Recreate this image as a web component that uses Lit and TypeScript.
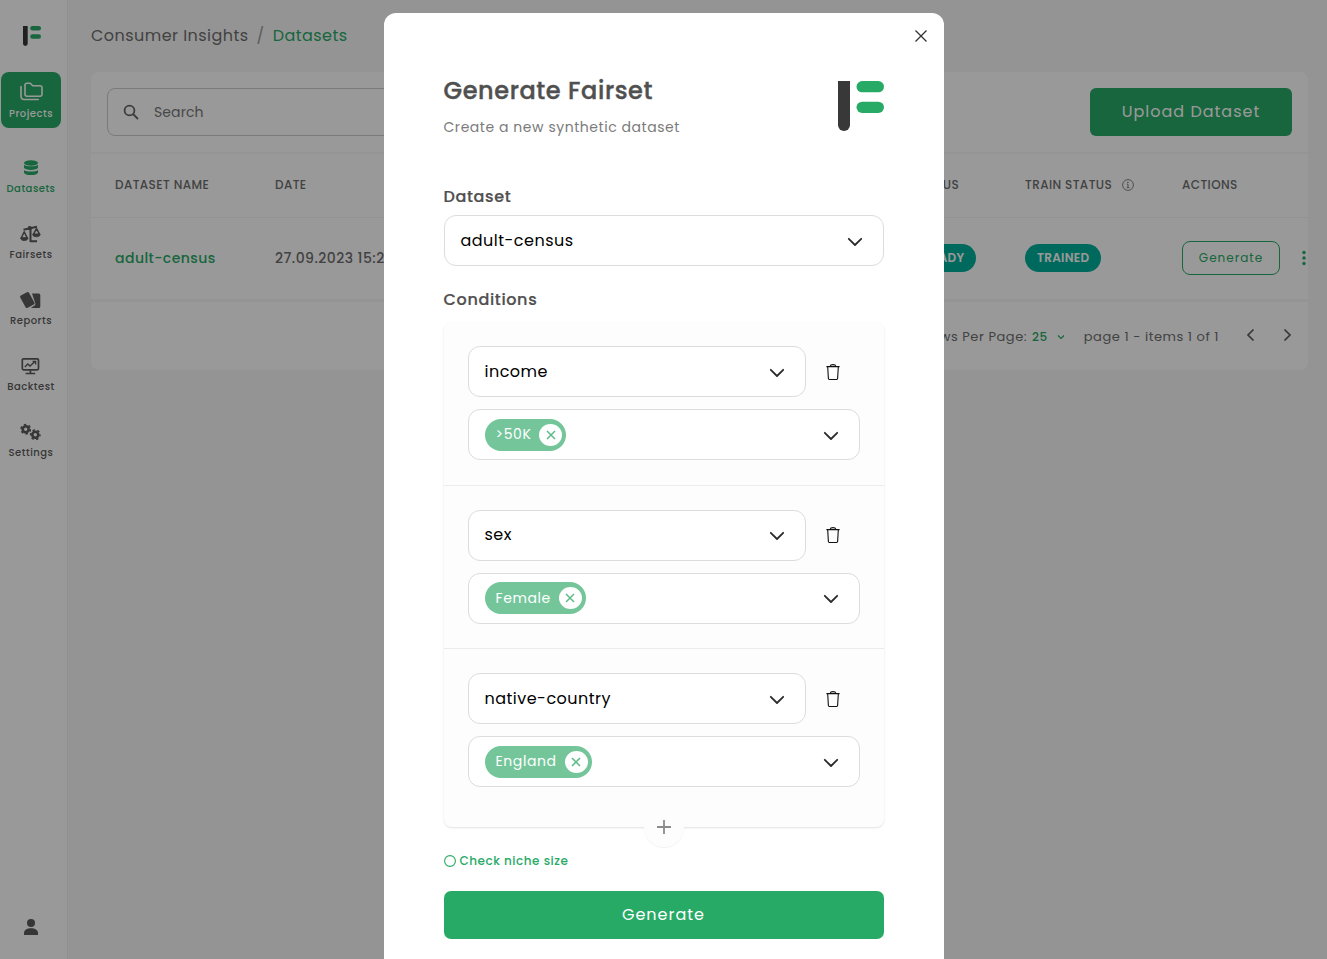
import { LitElement, html, css, svg } from "lit";
import { customElement, property } from "lit/decorators.js";
import { classMap } from "lit/directives/class-map.js";

const chevron = html`<svg width="16" height="10" viewBox="0 0 16 10" fill="none" stroke="#2b2b2b" stroke-width="1.8" stroke-linecap="round" stroke-linejoin="round"><path d="M1.8 1.8 8 8l6.2-6.2"/></svg>`;

const trash = html`<svg width="14" height="18" viewBox="0 0 14 18" fill="none" stroke="#111" stroke-width="1.1" stroke-linejoin="round"><path d="M.4 3.6h13.2M4 3.500c.3-1.300 1-1.900 3-1.900s2.700.600 3 1.900M1.700 4l.700 11.600c0 .600.400.900 1 .900h7.200c.600 0 1-.300 1-.900L12.300 4"/></svg>`;

const logo = (w: number, h: number) => html`<svg width=${w} height=${h} viewBox="0 0 46 50" preserveAspectRatio="none"><path fill="#383838" d="M0 0h12v44a6 6 0 0 1-12 0z"/><rect x="18.5" y="0" width="27.5" height="11.3" rx="5.65" fill="#27aa66"/><rect x="18.5" y="20.7" width="27.5" height="11.3" rx="5.65" fill="#27aa66"/></svg>`;

const glyphs = {
  projects: svg`<g fill="none" stroke="#fff" stroke-width="1.6" stroke-linejoin="round" stroke-linecap="round"><path d="M5 3.1a1.8 1.8 0 0 1 1.8-1.8h3.5l2.4 2.5h7.5A1.8 1.8 0 0 1 22 5.6v6.800a1.800 1.800 0 0 1-1.800 1.800H6.800A1.800 1.800 0 0 1 5 12.400z"/><path d="M1 4.500v9.700a3.300 3.300 0 0 0 3.300 3.300h14"/></g>`,
  datasets: svg`<g fill="#27aa66"><ellipse cx="12" cy="4" rx="7" ry="2.800"/><path d="M5 5.700c2 2.200 12 2.200 14 0v3.100c-1.500 2.800-12.500 2.800-14 0z"/><path d="M5 10.900c2 2.200 12 2.200 14 0v2.600c0 3.400-14 3.400-14 0z"/></g>`,
  fairsets: svg`<g fill="none" stroke="#5a5a5a" stroke-width="1.500" stroke-linejoin="round"><path d="M4.500 4.800 18 1.700M11.500 3.500v12.700H18" stroke-width="2"/><circle cx="10.800" cy="3.200" r="1.400" fill="#5a5a5a"/><path d="M5.200 6.800 2.300 13h6z M17.500 3.700l-3 5.500h6z"/><path d="M1.500 13h7.600c-.5 3.400-7.100 3.400-7.600 0zM13.500 9.500h7.800c-.5 3-7.300 3-7.800 0z" fill="#5a5a5a" stroke-width=".8"/></g>`,
  reports: svg`<g fill="#5a5a5a"><rect x="3.300" y="2" width="10" height="14" rx="1.500" transform="rotate(-29 8.300 9)"/><path d="M13 2.500h6.800a1.500 1.500 0 0 1 1.500 1.500v11.400a1.500 1.500 0 0 1-1.500 1.500h-8l3.800-2.500c1-.7 1-1.400.6-2.300z"/></g>`,
  backtest: svg`<g fill="none" stroke="#5a5a5a" stroke-width="1.700"><rect x="3.300" y="1.800" width="16.200" height="11" rx="1.300"/><path d="m5.800 9.900 3-3 2.200 2.200 4.500-4.200" stroke-width="1.400"/><path d="M13.600 4.500h3v3" stroke-width="1.300"/><path d="M6.600 16.500h9.600M11.400 13v3"/></g>`,
  settings: svg`<g fill="none" stroke="#5a5a5a"><circle cx="6.700" cy="6.200" r="3" stroke-width="2.600"/><circle cx="6.700" cy="6.200" r="4.700" stroke-width="1.500" stroke-dasharray="2.460"/><circle cx="16.300" cy="11.800" r="3" stroke-width="2.600"/><circle cx="16.300" cy="11.800" r="4.700" stroke-width="1.500" stroke-dasharray="2.460" stroke-dashoffset="1"/></g>`,
};

type GlyphName = keyof typeof glyphs;

@customElement("side-nav")
class SideNav extends LitElement {
  static styles = css`
    :host { display: flex; flex-direction: column; width: 67px; border-right: 1px solid #f0f0f0; background: #fff; flex: none; height: 100%; }
    .brand { height: 72px; width: 64px; display: flex; align-items: center; justify-content: center; box-sizing: border-box; }
    .item { width: 60px; height: 56px; margin: 0 0 10px 1px; border-radius: 8px; display: flex; flex-direction: column; align-items: center; color: #5a5a5a; font-size: 10px; font-weight: 500; letter-spacing: 0.5px; line-height: 14px; }
    .icon { height: 20px; margin: 10px 1px 3px 0; }
    .label { white-space: nowrap; }
    .on { background: #27aa66; color: #fff; margin-bottom: 21px; }
    .on .icon { margin: 10px 0 5px 1px; }
    .green { color: #27aa66; }
    svg { display: block; }
    .grow { flex: 1; }
    .user { width: 62px; display: flex; justify-content: center; margin-bottom: 23px; }
  `;

  entries: { name: GlyphName; label: string }[] = [
    { name: "projects", label: "Projects" },
    { name: "datasets", label: "Datasets" },
    { name: "fairsets", label: "Fairsets" },
    { name: "reports", label: "Reports" },
    { name: "backtest", label: "Backtest" },
    { name: "settings", label: "Settings" },
  ];

  render() {
    return html`
      <div class="brand">${logo(18, 20)}</div>
      ${this.entries.map(
        (e) => html`<div class=${classMap({ item: true, on: e.name === "projects", green: e.name === "datasets" })}>
          <svg class="icon" width="23" height="20" viewBox="0 0 23 20">${glyphs[e.name]}</svg>
          <span class="label">${e.label}</span>
        </div>`
      )}
      <div class="grow"></div>
      <div class="user"><svg width="16" height="18" viewBox="0 0 16 18" fill="#5a5a5a"><circle cx="8" cy="5" r="4"/><path d="M1 17v-1.800C1 12 4 10.300 8 10.300s7 1.700 7 4.900V17z"/></svg></div>
    `;
  }
}

@customElement("select-box")
class SelectBox extends LitElement {
  @property() value = "";
  @property({ type: Boolean }) chip = false;

  static styles = css`
    :host { display: block; }
    .box { box-sizing: border-box; height: 51px; border: 1px solid #dcdcdc; border-radius: 12px; background: #fff; display: flex; align-items: center; justify-content: space-between; padding: 0 20px 0 16px; color: #000; }
    .text { font-size: 16px; letter-spacing: 0.48px; line-height: 24px; }
    .chip { display: flex; align-items: center; gap: 8px; height: 32px; border-radius: 16px; background: #74c69a; color: #fff; font-size: 14px; letter-spacing: 0.6px; padding: 0 4px 0 11px; }
    .x { width: 23px; height: 22px; border-radius: 50%; background: #fff; display: flex; align-items: center; justify-content: center; }
    svg { display: block; }
    .arrow { padding-top: 2px; }
  `;

  render() {
    return html`<div class="box">
      ${this.chip
        ? html`<span class="chip"><span>${this.value}</span><span class="x"><svg width="10" height="10" viewBox="0 0 10 10" fill="none" stroke="#5dbb8a" stroke-width="1.5"><path d="m1 1 8 8M9 1 1 9"/></svg></span></span>`
        : html`<span class="text">${this.value}</span>`}
      <span class="arrow">${chevron}</span>
    </div>`;
  }
}

@customElement("dataset-page")
class DatasetPage extends LitElement {
  static styles = css`
    :host { display: block; flex: 1; min-width: 0; padding: 0 19px 0 23px; color: #6e6e6e; }
    .crumbs { height: 72px; display: flex; align-items: center; font-size: 16px; letter-spacing: 0.46px; box-sizing: border-box; padding-bottom: 1px; }
    .slash { margin: 0 8px; color: #999; }
    .green { color: #27aa66; }
    .card { background: #fff; border-radius: 8px; height: 298px; display: flex; flex-direction: column; }
    .bar { box-sizing: border-box; height: 82px; padding: 16px; border-bottom: 2px solid #f7f7f7; display: flex; justify-content: space-between; }
    .search { box-sizing: border-box; width: 480px; height: 48px; border: 1px solid #ccc; border-radius: 8px; display: flex; align-items: center; gap: 15px; padding-left: 15px; font-size: 14px; letter-spacing: 0.1px; color: #777; }
    .upload { box-sizing: border-box; width: 202px; height: 48px; padding-bottom: 2px; border-radius: 6px; background: #27aa66; color: #fff; display: flex; align-items: center; justify-content: center; font-size: 16px; letter-spacing: 1px; }
    .row { display: grid; grid-template-columns: 160px 637px 113px 157px 1fr; padding-left: 24px; align-items: center; box-sizing: border-box; white-space: nowrap; }
    .head { height: 64px; border-bottom: 1px solid #f4f4f4; font-size: 12px; font-weight: 500; letter-spacing: 0.4px; padding-bottom: 1px; }
    .data { height: 84px; border-bottom: 3px solid #f7f7f7; font-size: 14px; font-weight: 500; letter-spacing: 0.45px; }
    .th { display: flex; align-items: center; gap: 10px; }
    .cell { display: flex; align-items: center; padding-bottom: 1px; }
    .pill { display: flex; align-items: center; height: 28px; border-radius: 14px; background: #00b09b; color: #fff; font-size: 12px; font-weight: 600; letter-spacing: 0.3px; padding: 0 12px; }
    .acts { gap: 20.5px; }
    .gen { box-sizing: border-box; width: 98px; height: 34px; border: 1px solid #27aa66; border-radius: 8px; color: #27aa66; font-size: 12px; font-weight: 400; letter-spacing: 1px; display: flex; align-items: center; justify-content: center; }
    .foot { flex: 1; display: flex; align-items: center; justify-content: flex-end; font-size: 13px; letter-spacing: 0.55px; padding: 2px 16px 0 0; }
    .count { margin: 0 9px 0 5px; font-size: 12px; font-weight: 500; color: #27aa66; }
    .range { margin: 0 27px 0 19px; }
    .prev { margin-right: 28px; }
    svg { display: block; }
    .pg { padding-bottom: 5px; }
  `;

  render() {
    return html`
      <div class="crumbs"><span>Consumer Insights</span><span class="slash">/</span><span class="green">Datasets</span></div>
      <div class="card">
        <div class="bar">
          <div class="search"><svg width="16" height="16" viewBox="0 0 16 16" fill="none" stroke="#666" stroke-width="1.8"><circle cx="6.5" cy="6.5" r="4.9"/><path d="m10 10 5 5"/></svg><span>Search</span></div>
          <div class="upload">Upload Dataset</div>
        </div>
        <div class="row head">
          <span>DATASET NAME</span><span>DATE</span><span>STATUS</span>
          <span class="th">TRAIN STATUS<svg width="12" height="12" viewBox="0 0 12 12" fill="none" stroke="#777" stroke-width=".9"><circle cx="6" cy="6" r="5.4"/><path d="M4.8 5.2H6v3.3M4.700 8.600h2.700"/><circle cx="5.900" cy="3.400" r=".4" fill="#777"/></svg></span>
          <span>ACTIONS</span>
        </div>
        <div class="row data">
          <span class="green">adult-census</span><span>27.09.2023 15:24</span><span class="cell"><span class="pill">READY</span></span><span class="cell"><span class="pill">TRAINED</span></span>
          <span class="cell acts"><span class="gen">Generate</span><svg width="6" height="16" viewBox="0 0 6 16" fill="#27aa66"><circle cx="3" cy="2.500" r="1.700"/><circle cx="3" cy="8" r="1.700"/><circle cx="3" cy="13.500" r="1.700"/></svg></span>
        </div>
        <div class="foot">
          <span>Rows Per Page:</span><span class="count">25</span>
          <svg width="8" height="6" viewBox="0 0 8 6" fill="none" stroke="#27aa66" stroke-width="1.2"><path d="m1 1.500 3 3 3-3"/></svg>
          <span class="range">page 1 - items 1 of 1</span>
          <span class="pg prev"><svg width="9" height="14" viewBox="0 0 9 14" fill="none" stroke="#5c5c5c" stroke-width="1.7"><path d="M7.500 1.500 2 7l5.500 5.500"/></svg></span>
          <span class="pg"><svg width="9" height="14" viewBox="0 0 9 14" fill="none" stroke="#5c5c5c" stroke-width="1.7"><path d="M1.500 1.500 7 7l-5.500 5.500"/></svg></span>
        </div>
      </div>
    `;
  }
}

@customElement("fairset-dialog")
class FairsetDialog extends LitElement {
  conditions = [
    { field: "income", value: ">50K" },
    { field: "sex", value: "Female" },
    { field: "native-country", value: "England" },
  ];

  static styles = css`
    :host { display: block; box-sizing: border-box; position: relative; width: 560px; height: 980px; background: #fff; border-radius: 12px; padding: 68px 60px 0; color: #505050; }
    .close { position: absolute; right: 17px; top: 17px; }
    svg { display: block; }
    .top { display: flex; justify-content: space-between; height: 107px; }
    .title { font-size: 24px; font-weight: 500; line-height: 20px; letter-spacing: 0.6px; -webkit-text-stroke: 0.4px #505050; }
    .sub { font-size: 14px; line-height: 20px; margin-top: 16px; color: #7b7b7b; letter-spacing: 0.55px; }
    .label { font-size: 16px; font-weight: 500; line-height: 18px; letter-spacing: 0.65px; -webkit-text-stroke: 0.2px #505050; }
    .ds { margin: 9px 0 25px; }
    .panel { position: relative; height: 505px; margin-top: 13px; box-sizing: border-box; border-radius: 8px; background: #fdfdfd; box-shadow: 0 1px 2px rgba(0,0,0,.12); }
    .group { padding: 24px 24px 24.5px; border-bottom: 1px solid #ececec; }
    .group:last-of-type { border-bottom: 0; }
    .line { display: grid; grid-template-columns: 338px 14px; gap: 20px; align-items: center; margin-bottom: 12px; }
    .add { position: absolute; left: 200px; bottom: -20px; width: 40px; height: 40px; border-radius: 50%; background: #fdfdfd; display: flex; align-items: center; justify-content: center; box-shadow: 0 1px 1px rgba(0,0,0,.05); }
    .check { display: flex; align-items: center; gap: 4px; margin: 26px 0 22px; height: 16px; color: #27aa66; font-size: 12px; font-weight: 500; letter-spacing: 0.52px; }
    .go { box-sizing: border-box; height: 48px; padding-bottom: 2px; border-radius: 7px; background: #27aa66; color: #fff; display: flex; align-items: center; justify-content: center; font-size: 16px; letter-spacing: 1px; }
  `;

  render() {
    return html`
      <svg class="close" width="12" height="12" viewBox="0 0 12 12" fill="none" stroke="#333" stroke-width="1.3"><path d="m.5.5 11 11M11.5.5l-11 11"/></svg>
      <div class="top">
        <div><div class="title">Generate Fairset</div><div class="sub">Create a new synthetic dataset</div></div>
        ${logo(46, 50)}
      </div>
      <div class="label">Dataset</div>
      <select-box class="ds" value="adult-census"></select-box>
      <div class="label">Conditions</div>
      <div class="panel">
        ${this.conditions.map(
          (c) => html`<section class="group">
            <div class="line"><select-box value=${c.field}></select-box>${trash}</div>
            <select-box chip value=${c.value}></select-box>
          </section>`
        )}
        <div class="add"><svg width="14" height="14" viewBox="0 0 14 14" stroke="#8c8c8c" stroke-width="1.8"><path d="M7 0v14M0 7h14"/></svg></div>
      </div>
      <div class="check"><svg width="12" height="12" viewBox="0 0 12 12" fill="none" stroke="#27aa66" stroke-width="1.1"><circle cx="6" cy="6" r="5.4"/></svg><span>Check niche size</span></div>
      <div class="go">Generate</div>
    `;
  }
}

@customElement("app-root")
class AppRoot extends LitElement {
  static styles = css`
    :host { display: block; position: relative; width: 100%; height: 100vh; overflow: hidden; font-family: Poppins, Inter, "Open Sans", sans-serif; background: #f7f7f7; }
    .shell { display: flex; height: 100%; }
    .veil { position: absolute; inset: 0; background: rgba(0,0,0,.4); display: flex; justify-content: center; padding-top: 13px; }
  `;

  render() {
    return html`
      <div class="shell"><side-nav></side-nav><dataset-page></dataset-page></div>
      <div class="veil"><fairset-dialog></fairset-dialog></div>
    `;
  }
}
